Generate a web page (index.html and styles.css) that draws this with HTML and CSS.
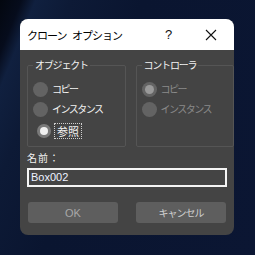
FILE: index.html
```html
<!DOCTYPE html>
<html lang="ja">
<head>
<meta charset="utf-8">
<link rel="stylesheet" href="styles.css">
</head>
<body>
<div class="dialog">
  <div class="titlebar">
    <span class="title">クローン オプション</span>
    <span class="help">?</span>
    <span class="close"><svg width="12" height="12" viewBox="0 0 12 12"><path d="M1 1L11 11M11 1L1 11" stroke="#111" stroke-width="1.1" fill="none"/></svg></span>
  </div>
  <div class="content">
    <div class="groups">
      <fieldset class="group">
        <legend>オブジェクト</legend>
        <div class="rows">
          <div class="row"><span class="radio"></span><span class="lbl">コピー</span></div>
          <div class="row"><span class="radio"></span><span class="lbl">インスタンス</span></div>
          <div class="row sel"><span class="radio on"></span><span class="lbl focus">参照</span></div>
        </div>
      </fieldset>
      <fieldset class="group disabled">
        <legend>コントローラ</legend>
        <div class="rows">
          <div class="row"><span class="radio dim-on"></span><span class="lbl">コピー</span></div>
          <div class="row"><span class="radio"></span><span class="lbl">インスタンス</span></div>
        </div>
      </fieldset>
    </div>
    <div class="name-label">名前：</div>
    <div class="input">Box002</div>
    <div class="buttons">
      <div class="btn ok">OK</div>
      <div class="btn cancel">キャンセル</div>
    </div>
  </div>
</div>
</body>
</html>
```
FILE: styles.css
```css
html, body {
  margin: 0;
  height: 100%;
}
body {
  background:
    linear-gradient(112deg, #03070f 0%, #060c1c 6%, #10203f 10%, #0d1a36 20%, #0a1530 40%, #0b1633 100%);
  font-family: "Noto Sans CJK JP", "Noto Sans", sans-serif;
  overflow: hidden;
}
.dialog {
  margin: 19px 0 0 20px;
  width: 214px;
  height: 216px;
  border-radius: 8px;
  overflow: hidden;
  background: #444444;
  display: flex;
  flex-direction: column;
}
.titlebar {
  height: 31px;
  background: #ffffff;
  display: flex;
  align-items: center;
  padding-left: 7px;
  flex-shrink: 0;
}
.title {
  font-size: 11px;
  letter-spacing: -1px;
  word-spacing: 4px;
  color: #000;
  width: 138px;
}
.help {
  font-family: "Liberation Sans", sans-serif;
  font-size: 13px;
  color: #111;
  width: 40px;
}
.close {
  display: flex;
  align-items: center;
}
.content {
  padding: 9px 0 0 7px;
  display: flex;
  flex-direction: column;
}
.groups {
  display: flex;
  gap: 10px;
}
.group {
  margin: 0;
  padding: 0 0 0 5px;
  width: 96px;
  height: 86px;
  box-sizing: content-box;
  border: 1px solid #555555;
  border-radius: 2px;
  min-width: 0;
}
.group legend {
  font-size: 10px;
  line-height: 12px;
  letter-spacing: -1.2px;
  color: #f2f2f2;
  padding: 0 2px;
  margin-left: 0;
}
.rows {
  margin-top: 8px;
  display: flex;
  flex-direction: column;
}
.row {
  height: 20px;
  display: flex;
  align-items: center;
  gap: 4px;
}
.row.sel {
  height: 22px;
  margin-top: 1px;
}
.radio {
  width: 15px;
  height: 15px;
  border-radius: 50%;
  background: #636363;
  box-sizing: border-box;
  flex-shrink: 0;
  display: flex;
  align-items: center;
  justify-content: center;
}
.radio.on {
  width: 14px;
  height: 14px;
  margin-left: 4px;
  margin-right: -1px;
  background: #7a7a7a;
}
.radio.on::after {
  content: "";
  width: 8px;
  height: 8px;
  border-radius: 50%;
  background: #f0f0f0;
}
.radio.dim-on {
  background: #646464;
}
.radio.dim-on::after {
  content: "";
  width: 9px;
  height: 9px;
  border-radius: 50%;
  background: #9a9a9a;
}
.lbl {
  font-size: 10px;
  line-height: 12px;
  letter-spacing: -1.5px;
  color: #f2f2f2;
}
.lbl.focus {
  font-size: 11px;
  letter-spacing: 0;
  border: 1px dotted #cfcfcf;
  padding: 1px 2px;
}
.disabled .lbl {
  color: #8a8a8a;
}
.name-label {
  margin-top: 5px;
  font-size: 10px;
  line-height: 12px;
  letter-spacing: 1px;
  color: #f2f2f2;
}
.input {
  margin-top: 4px;
  width: 200px;
  height: 19px;
  box-sizing: border-box;
  border: 2px solid #f4f4f4;
  font-family: "Liberation Sans", sans-serif;
  font-size: 11px;
  line-height: 15px;
  padding-left: 2px;
  color: #eef2ff;
}
.buttons {
  margin-top: 15px;
  margin-left: 1px;
  display: flex;
  gap: 18px;
}
.btn {
  width: 90px;
  height: 21px;
  border-radius: 3px;
  background: #5e5e5e;
  display: flex;
  align-items: center;
  justify-content: center;
  font-size: 10px;
}
.btn.ok {
  font-family: "Liberation Sans", sans-serif;
  font-size: 11px;
  color: #a8a8a8;
}
.btn.cancel {
  color: #d0d0d0;
  letter-spacing: -1px;
}
```
